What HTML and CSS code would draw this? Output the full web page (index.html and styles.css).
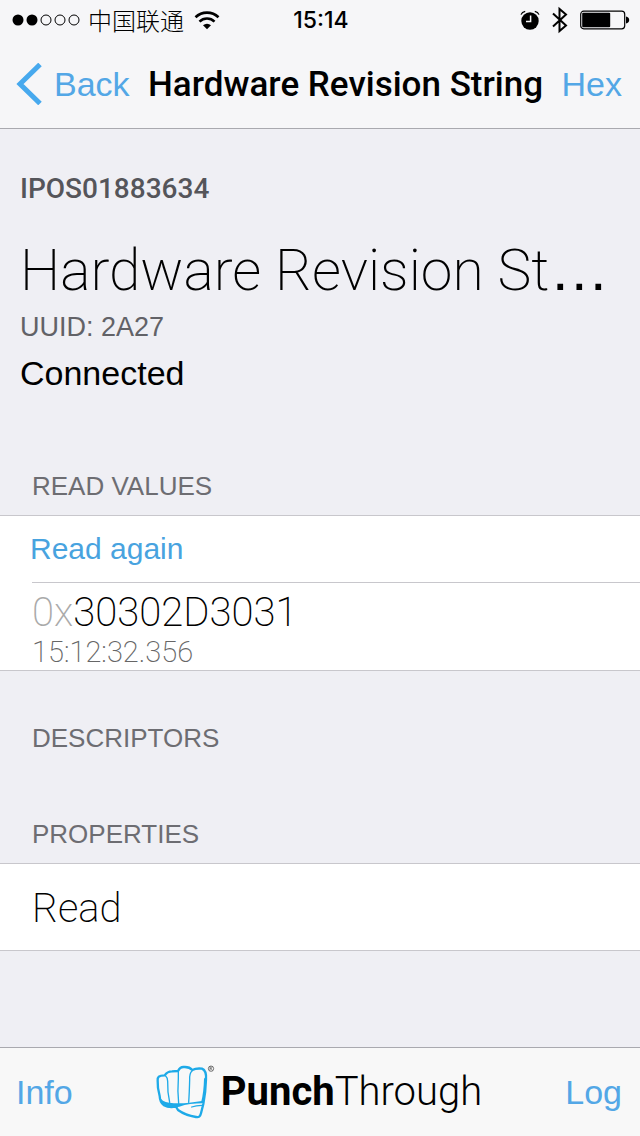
FILE: index.html
```html
<!DOCTYPE html>
<html lang="en">
<head>
<meta charset="utf-8">
<meta name="viewport" content="width=device-width">
<title>Hardware Revision String</title>
<link rel="stylesheet" href="styles.css">
</head>
<body>
<div class="screen">
  <header class="top">
    <div class="status">
      <div class="status-left">
        <svg class="signal" width="70" height="12" viewBox="0 0 70 12">
          <circle cx="6" cy="6" r="5.5"/><circle cx="20" cy="6" r="5.5"/>
          <g fill="none" stroke="#000"><circle cx="34" cy="6" r="5"/><circle cx="48" cy="6" r="5"/><circle cx="62" cy="6" r="5"/></g>
        </svg>
        <span class="carrier" lang="zh">中国联通</span>
        <svg class="wifi" width="26" height="20" viewBox="0 0 26 20">
          <g fill="none" stroke="#000" stroke-width="2.6"><path d="M1.500 7.300a16.500 16.500 0 0 1 23 0"/><path d="M5.500 11.600a10.800 10.800 0 0 1 15 0"/></g>
          <path d="M9 15.200a6 6 0 0 1 8 0l-4 4z"/>
        </svg>
      </div>
      <span class="clock">15:14</span>
      <div class="status-right">
        <svg width="20" height="20" viewBox="0 0 20 20">
          <circle cx="10" cy="11" r="8.700"/>
          <path d="M10.600 5.600v6H6" fill="none" stroke="#f6f6f8" stroke-width="1.500"/>
          <path d="M1 4.600Q2 2 5.200 1.400M19 4.600Q18 2 14.800 1.400" fill="none" stroke="#000" stroke-width="1.200"/>
        </svg>
        <svg width="16" height="28" viewBox="0 0 16 28"><path d="M1 7.500l13 12-6.500 5.500V3L14 8.500l-13 12" fill="none" stroke="#000" stroke-width="2"/></svg>
        <svg class="battery" width="50" height="20" viewBox="0 0 50 20">
          <rect x=".7" y="1.200" width="44" height="17.600" rx="3" fill="none" stroke="#000" stroke-width="1.200"/>
          <rect x="2.200" y="2.800" width="28" height="14.400" rx="1"/>
          <path d="M46 6.500q3.200.8 3.200 3.500t-3.200 3.500z"/>
        </svg>
      </div>
    </div>
    <nav class="nav">
      <button class="link back" type="button">
        <svg width="26" height="42" viewBox="0 0 26 42"><path d="M24 1.500L4 21l20 19.500" fill="none" stroke="#47a9ee" stroke-width="5"/></svg>
        <span>Back</span>
      </button>
      <h1 class="nav-title">Hardware Revision String</h1>
      <button class="link" type="button">Hex</button>
    </nav>
  </header>

  <main class="content">
    <section class="summary">
      <p class="device">IPOS01883634</p>
      <h2 class="name">Hardware Revision St<span class="more">…</span></h2>
      <p class="uuid">UUID: 2A27</p>
      <p class="state">Connected</p>
    </section>

    <section>
      <h3 class="heading">READ VALUES</h3>
      <div class="group">
        <button class="read-again" type="button">Read again</button>
        <div class="value-row">
          <p class="value"><span class="prefix">0x</span>30302D3031</p>
          <p class="time">15:12:32.356</p>
        </div>
      </div>
    </section>

    <section><h3 class="heading">DESCRIPTORS</h3></section>

    <section>
      <h3 class="heading">PROPERTIES</h3>
      <div class="group"><p class="property">Read</p></div>
    </section>
  </main>

  <footer class="toolbar">
    <button class="link" type="button">Info</button>
    <div class="brand">
      <svg width="59" height="54" viewBox="10 9 177 162">
        <path d="M15 56C14 45 18 40 36 40Q44 28 58 28L76 27Q82 14 94 15Q110 14 119 24Q130 18 148 20Q162 26 160 52Q159 90 152 126L145 154Q142 168 130 165Q98 160 76 144L70 134Q48 138 34 130Q22 122 21 102Q14 78 15 56Z" fill="#f8f8f8" stroke="#1eaae8" stroke-width="7" stroke-linejoin="round"/>
        <path d="M22 104Q26 119 50 122Q76 126 110 122L153 116L151 124Q110 124 80 134L70 136Q44 139 31 128Q22 120 22 104Z" fill="#1eaae8"/>
        <path d="M154 50Q153 90 146 118L152 120Q161 80 162 42Z" fill="#1eaae8"/>
        <g fill="none" stroke="#1eaae8" stroke-width="4" stroke-linecap="round"><path d="M39 42Q45 47 45 58Q44 92 51 121"/><path d="M77 29V50Q74 88 78 124"/><path d="M118 27Q110 34 111 54Q110 94 108 121"/><path d="M147 130Q130 130 117 135"/></g>
        <circle cx="175" cy="20" r="8" fill="none" stroke="#333" stroke-width="2"/>
        <path d="M172 25V15h4q4 2.500 0 5h-4m3 0l4 5" fill="none" stroke="#333" stroke-width="1.500"/>
      </svg>
      <span class="wordmark"><b>Punch</b>Through</span>
    </div>
    <button class="link" type="button">Log</button>
  </footer>
</div>
</body>
</html>
```
FILE: styles.css
```css
* { box-sizing: border-box; }
body { margin: 0; background: #efeff4; color: #000; font-family: "Liberation Sans", Arial, "Noto Sans CJK SC", sans-serif; }
h1, h2, h3, p { margin: 0; font-weight: 400; }
button { margin: 0; padding: 0; border: 0; background: none; font: inherit; cursor: pointer; }
svg { display: block; flex: none; }

.screen { min-height: 100vh; display: flex; flex-direction: column; }
.top { background: #f6f6f8; border-bottom: 1px solid #a9a9af; }
.status { height: 40px; padding: 0 10px 0 12px; display: grid; grid-template-columns: 1fr auto 1fr; align-items: center; }
.status-left, .status-right { display: flex; align-items: center; }
.status-left { gap: 6px; }
.status-right { justify-content: flex-end; gap: 12px; }
.carrier { font: 300 24px/40px "Noto Sans CJK SC", sans-serif; white-space: nowrap; }
.wifi { margin-left: 4px; }
.clock { font: 500 23px/40px Inter, sans-serif; }

.nav { height: 88px; padding: 0 18px 0 16px; display: flex; align-items: center; justify-content: space-between; }
.link { color: #53a7e6; font-size: 34px; line-height: 40px; }
.back { display: flex; align-items: center; gap: 12px; }
.nav-title { padding-top: 2px; font: 500 35px/40px Roboto, sans-serif; white-space: nowrap; }

.content { flex: 1; }
.summary { padding: 42px 20px 20px; }
.device { color: #55555a; font: 500 28px/36px Roboto, sans-serif; }
.name { margin-top: 28px; font: 200 57px/72px Roboto, sans-serif; white-space: nowrap; }
.more { font-family: "Liberation Sans", Arial, sans-serif; font-size: 60px; line-height: 1px; }
.uuid { color: #626267; font-size: 27px; line-height: 40px; }
.state { font-size: 34px; line-height: 52px; }

.heading { padding: 47px 32px 9px; color: #6d6d72; font-size: 26px; line-height: 40px; }
.group { background: #fff; border-top: 1px solid #c8c7cc; border-bottom: 1px solid #c8c7cc; }
.read-again { display: block; padding: 0 30px; color: #48a3df; font-size: 30px; line-height: 66px; }
.value-row { margin-left: 32px; padding-top: 8px; border-top: 1px solid #c8c7cc; }
.value { font: 200 40px/44px Roboto, sans-serif; }
.prefix { color: #aaa; }
.time { color: #666; font: 200 29px/35px Roboto, sans-serif; }
.property { padding: 4px 32px 0; font: 200 40px/82px Roboto, sans-serif; }

.toolbar { height: 89px; padding: 0 18px 0 16px; display: flex; align-items: center; justify-content: space-between; background: #f8f8f8; border-top: 1px solid #a9a9af; }
.brand { display: flex; align-items: center; gap: 6px; }
.wordmark { font: 300 40px/54px Roboto, sans-serif; }
.wordmark b { font-weight: 700; }
```
